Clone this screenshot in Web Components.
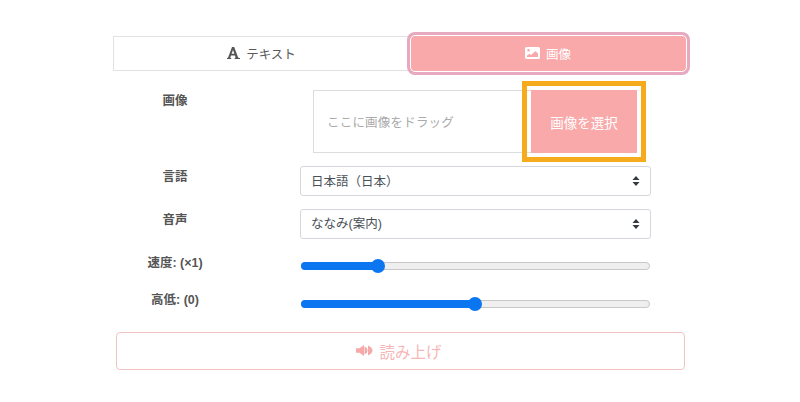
<!DOCTYPE html>
<html lang="ja"><head><meta charset="utf-8"><style>
html,body{margin:0;padding:0;background:#fff}
body{font-family:"Liberation Sans","Noto Sans CJK JP",sans-serif;color:#495057}
</style></head><body>
<template id="tabs-t"><style>
:host{display:flex;height:35px;margin-bottom:19px}
</style><slot></slot></template>
<template id="tab-t"><style>
:host{display:flex;flex:none;width:297px;align-items:center;justify-content:center;gap:6px;font-size:12.5px;box-sizing:border-box;border:1px solid #e2e2e2;color:#5a5a5a;padding-bottom:1px}
:host([active]){flex:1 1 0;width:auto;background:#f9a9aa;color:#fff;border:1px solid #fff;border-radius:5px;margin:-1px 0;box-shadow:0 0 0 3px #e6a9c0;padding-right:1px}
</style><slot name="icon"></slot><slot></slot></template>
<template id="row-t"><style>
:host{display:flex;align-items:flex-start}
.l{width:124px;flex:none;text-align:center;font-size:12.5px;font-weight:700;color:#555;line-height:18px;padding-top:var(--lt,0)}
.c{margin-left:63px;width:351px}
</style><div class="l" part="label"><slot name="label"></slot></div><div class="c"><slot></slot></div></template>
<template id="sel-t"><style>
:host{display:flex;align-items:center;justify-content:space-between;box-sizing:border-box;height:30px;border:1px solid #d4d8dc;border-radius:3px;padding:0 10px 0 10px;font-size:12.5px;color:#495057;background:#fff}
svg{display:block}
span{padding-bottom:2px}
</style><span><slot></slot></span><svg width="8" height="10" viewBox="0 0 8 10"><path d="M4 0L7.500 4H.5zM4 10L.5 6h7z" fill="#343a40"/></svg></template>
<template id="range-t"><style>
:host{display:block;position:relative;height:12px}
.t{position:absolute;left:1px;right:1px;top:2px;height:8px;box-sizing:border-box;border:1px solid #c8c8c8;border-radius:4px;background:#efefef}
.f{position:absolute;left:1px;top:2px;height:8px;border-radius:4px;background:#0b76f0}
.k{position:absolute;top:-1px;width:14px;height:14px;margin-left:-7px;border-radius:50%;background:#0b76f0}
</style><div class="t"></div><div class="f"></div><div class="k"></div></template>
<template id="drop-t"><style>
:host{display:flex;box-sizing:border-box;height:63px;margin-left:13px;width:324px;border:1px solid #dcdcdc;border-right:0}
.h{flex:1;display:flex;align-items:center;padding-left:13px;font-size:12.5px;letter-spacing:.2px;color:#aaa}
.b{position:relative;width:106px;margin:-1px 0;background:#f9a9aa;color:#fff;display:flex;align-items:center;justify-content:center;font-size:13.5px;outline:5px solid #f5ab1c;outline-offset:4px}
</style><div class="h"><slot name="hint"></slot></div><div class="b"><slot name="btn"></slot></div></template>
<template id="speak-t"><style>
:host{display:flex;box-sizing:border-box;height:38px;width:569px;margin:0 0 0 3px;border:1px solid #f3c4c4;border-radius:4px;align-items:center;justify-content:center;gap:6px;color:#f5b7b7;font-size:15.500px;padding:0 3px 1px 0}
</style><slot name="icon"></slot><slot></slot></template>

<t-app>
  <t-tabs>
    <t-tab><svg slot="icon" width="13" height="12" viewBox="0 0 13 12"><path fill-rule="evenodd" d="M0 12V11l1-.2L5 0h2.200l4 10.800 1.800.2v1H7.600v-1l1-.2-.7-2.300H4l-.8 2.300 1 .2v1zM4.600 6.800h2.800L6 2.900z" fill="#555"/></svg><span>テキスト</span></t-tab>
    <t-tab active><svg slot="icon" width="15" height="12" viewBox="0 0 15 12"><path fill-rule="evenodd" d="M1.500 0h12A1.500 1.500 0 0 1 15 1.500v9a1.500 1.500 0 0 1-1.500 1.500h-12A1.500 1.500 0 0 1 0 10.500v-9A1.500 1.500 0 0 1 1.500 0zM2 8.500V10h11V6.500L10.500 4 6 8 4.500 6.800zM3.500 2a1.300 1.300 0 1 0 0 2.600 1.300 1.300 0 0 0 0-2.600z" fill="#fff"/></svg><span>画像</span></t-tab>
  </t-tabs>
  <t-row style="margin-bottom:13px;--lt:2px"><span slot="label">画像</span>
    <t-drop><span slot="hint">ここに画像をドラッグ</span><span slot="btn">画像を選択</span></t-drop></t-row>
  <t-row style="margin-bottom:12.500px;--lt:2px"><span slot="label">言語</span><t-sel>日本語（日本）</t-sel></t-row>
  <t-row style="margin-bottom:14px;--lt:2px"><span slot="label">音声</span><t-sel style="height:30.500px">ななみ(案内)</t-sel></t-row>
  <t-row style="margin-bottom:19px;--lt:.5px"><span slot="label">速度: (×1)</span><t-range value="78" style="margin-top:6.500px"></t-range></t-row>
  <t-row style="margin-bottom:22.500px;--lt:.5px"><span slot="label">高低: (0)</span><t-range value="175" style="margin-top:7px"></t-range></t-row>
  <t-speak><svg slot="icon" width="17" height="13" viewBox="0 0 17 13"><path d="M0 4.200h3.500L8 1v11L3.500 8.800H0zM8.500 2.500c1.900.7 3 2.200 3 4s-1.100 3.300-3 4zM12 1.500c2.500 1 4.500 2.800 4.500 5s-2 4-4.500 5z" fill="#f5a9a9"/></svg><span>読み上げ</span></t-speak>
</t-app>
<script>
function def(n,t,extra){customElements.define(n,class extends HTMLElement{constructor(){super();const s=this.attachShadow({mode:'open'});s.appendChild(document.getElementById(t).content.cloneNode(true));}connectedCallback(){extra&&extra(this)}})}
customElements.define('t-app',class extends HTMLElement{constructor(){super();this.attachShadow({mode:'open'}).innerHTML='<style>:host{display:block;width:574px;margin:0 auto;padding-top:36px}</style><slot></slot>'}});
def('t-tabs','tabs-t');def('t-tab','tab-t');def('t-row','row-t');def('t-sel','sel-t');def('t-drop','drop-t');def('t-speak','speak-t');
def('t-range','range-t',e=>{const v=e.getAttribute('value');const r=e.shadowRoot;r.querySelector('.f').style.width=v+'px';r.querySelector('.k').style.left=v+'px'});
</script></body></html>
